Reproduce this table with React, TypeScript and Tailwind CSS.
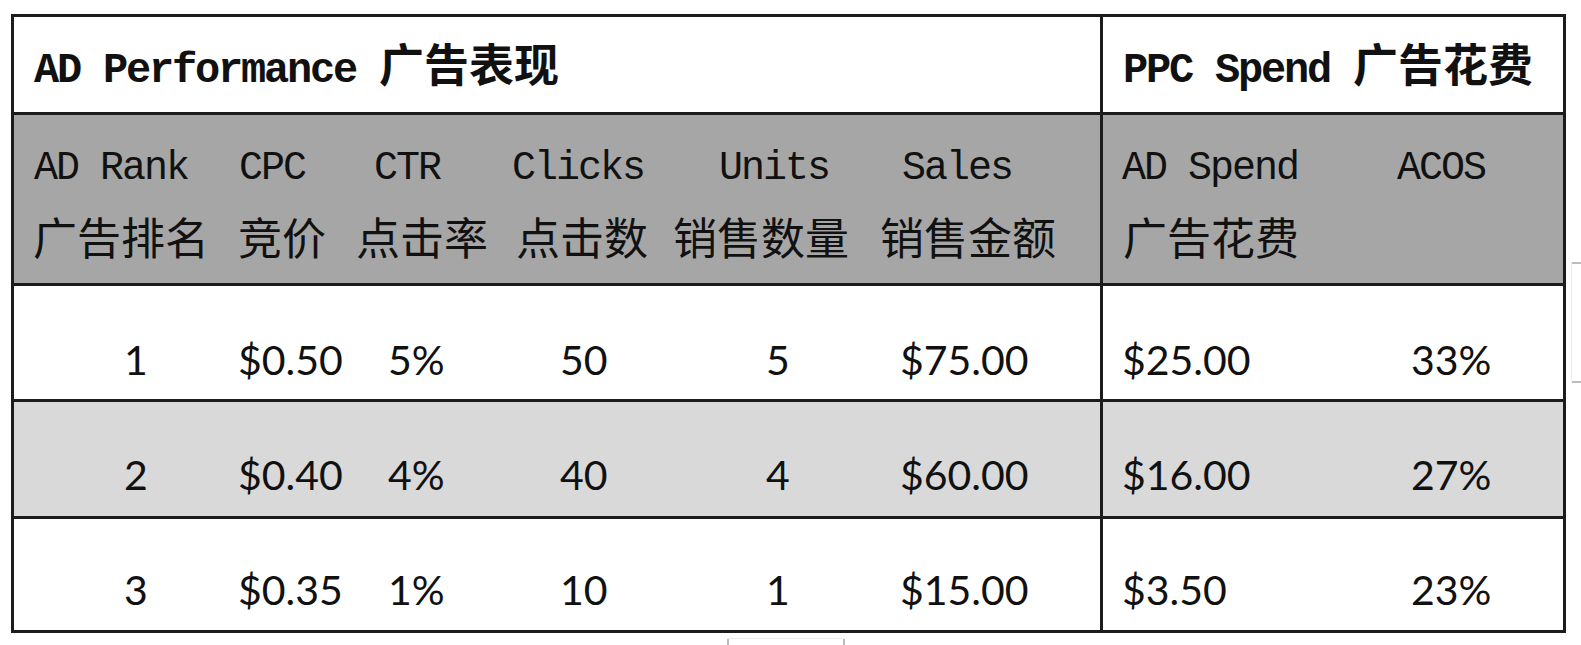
import React from 'react';

const mono = "font-['Liberation_Mono','DejaVu_Sans_Mono',monospace]";
const cjk = "font-['Noto_Sans_CJK_SC','Noto_Sans',sans-serif]";
const num = "font-['Lato','Open_Sans',sans-serif]";

const cols = 'grid grid-cols-[211px_125px_145px_170px_200px_238px_267px_193px]';

type Head = { en: string; zh?: string; enPad: string; zhPad: string; divider?: boolean };

const heads: Head[] = [
    { en: 'AD Rank', zh: '广告排名', enPad: 'pl-[20px]', zhPad: 'pl-[19px]' },
    { en: 'CPC', zh: '竞价', enPad: 'pl-[14px]', zhPad: 'pl-[13px]' },
    { en: 'CTR', zh: '点击率', enPad: 'pl-[24px]', zhPad: 'pl-[6px]' },
    { en: 'Clicks', zh: '点击数', enPad: 'pl-[17px]', zhPad: 'pl-[21px]' },
    { en: 'Units', zh: '销售数量', enPad: 'pl-[54px]', zhPad: 'pl-[8px]' },
    { en: 'Sales', zh: '销售金额', enPad: 'pl-[37px]', zhPad: 'pl-[15px]', divider: true },
    { en: 'AD Spend', zh: '广告花费', enPad: 'pl-[19px]', zhPad: 'pl-[20px]' },
    { en: 'ACOS', enPad: 'pl-[27px]', zhPad: '' },
];

// left padding of each data column
const dataPad = [
    'pl-[110px]',
    'pl-[13px]',
    'pl-[38px]',
    'pl-[65px]',
    'pl-[101px]',
    'pl-[35px] border-r-[3px] border-[#1c1c1c]',
    'pl-[19px]',
    'pl-[41px]',
];

const rows = [
    { vals: ['1', '$0.50', '5%', '50', '5', '$75.00', '$25.00', '33%'], bg: 'bg-white', h: 'h-[116px]', pb: 'pb-[19px]' },
    { vals: ['2', '$0.40', '4%', '40', '4', '$60.00', '$16.00', '27%'], bg: 'bg-[#d9d9d9]', h: 'h-[117px]', pb: 'pb-[21px]' },
    { vals: ['3', '$0.35', '1%', '10', '1', '$15.00', '$3.50', '23%'], bg: 'bg-white', h: 'h-[111px]', pb: 'pb-[20px]' },
];

export default function App() {
    return (
        <div className="relative min-h-screen bg-white pt-[14px] pl-[11px] text-[#111]">
            <div className="w-[1555px] border-[3px] border-[#1c1c1c]">
                {/* Title row */}
                <div className="flex h-[98px] border-b-[3px] border-[#1c1c1c]">
                    <div className="flex w-[1089px] items-center border-r-[3px] border-[#1c1c1c] pl-[20px] pt-[3px]">
                        <div className="whitespace-pre leading-none">
                            <span className={`${mono} text-[42px] font-bold tracking-[-2.2px]`}>AD Performance </span>
                            <span className={`${cjk} text-[45px] font-bold`}>广告表现</span>
                        </div>
                    </div>
                    <div className="flex flex-1 items-center pl-[20px] pt-[3px]">
                        <div className="whitespace-pre leading-none">
                            <span className={`${mono} text-[42px] font-bold tracking-[-2.2px]`}>PPC Spend </span>
                            <span className={`${cjk} text-[45px] font-bold`}>广告花费</span>
                        </div>
                    </div>
                </div>

                {/* Column headings */}
                <div className={`${cols} h-[171px] border-b-[3px] border-[#1c1c1c] bg-[#a6a6a6]`}>
                    {heads.map((h) => (
                        <div
                            key={h.en}
                            className={`flex flex-col pt-[34px] ${h.divider ? 'border-r-[3px] border-[#1c1c1c]' : ''}`}
                        >
                            <div className={`${mono} ${h.enPad} h-[40px] text-[40px] leading-none tracking-[-2px] whitespace-nowrap`}>
                                {h.en}
                            </div>
                            {h.zh && (
                                <div className={`${cjk} ${h.zhPad} mt-[25px] h-[44px] text-[44px] leading-none whitespace-nowrap`}>
                                    {h.zh}
                                </div>
                            )}
                        </div>
                    ))}
                </div>

                {/* Data rows */}
                {rows.map((r, i) => (
                    <div
                        key={i}
                        className={`${cols} ${r.h} ${r.bg} ${i < rows.length - 1 ? 'border-b-[3px] border-[#1c1c1c]' : ''}`}
                    >
                        {r.vals.map((v, j) => (
                            <div key={j} className={`flex items-end ${r.pb} ${dataPad[j]}`}>
                                <span className={`${num} text-[41px] leading-none whitespace-nowrap`}>{v}</span>
                            </div>
                        ))}
                    </div>
                ))}
            </div>

            {/* faint selection handles around the picture */}
            <div className="absolute left-[1571px] top-[262px] h-[121px] w-[10px] border-l border-[#ececec]">
                <div className="h-[2px] w-[10px] bg-[#bdbdbd]" />
                <div className="mt-[117px] h-[2px] w-[10px] bg-[#bdbdbd]" />
            </div>
            <div className="absolute left-[727px] top-[638px] flex h-[7px] w-[118px] items-start justify-between border-t border-[#ececec]">
                <div className="h-[7px] w-[2px] bg-[#bdbdbd]" />
                <div className="h-[7px] w-[2px] bg-[#bdbdbd]" />
            </div>
        </div>
    );
}
